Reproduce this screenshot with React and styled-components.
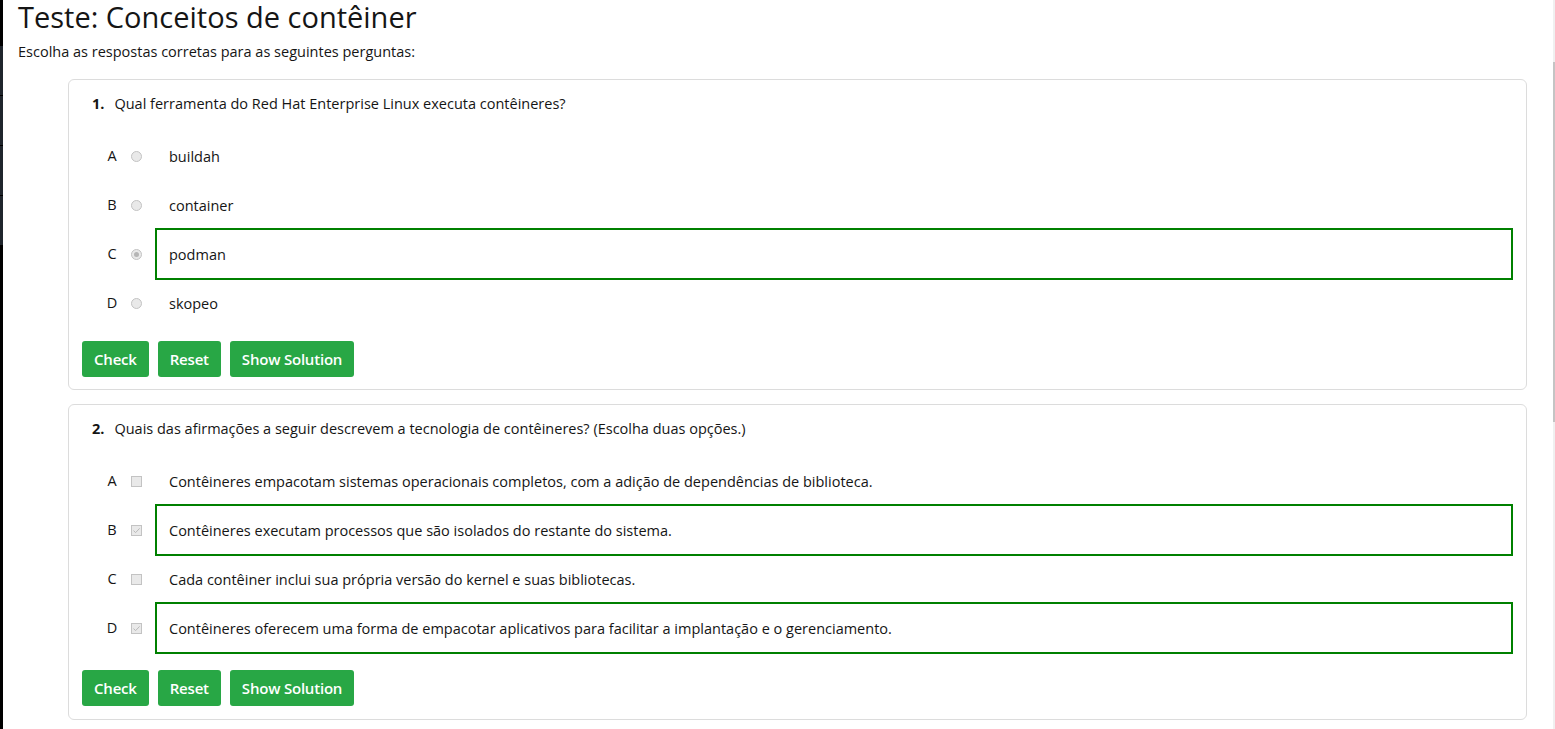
import React from "react";
import styled, { createGlobalStyle } from "styled-components";

const GlobalStyle = createGlobalStyle`
  html, body {
    margin: 0;
    padding: 0;
    background: #ffffff;
  }
  body {
    font-family: "Open Sans", "Liberation Sans", sans-serif;
    color: #151515;
  }
`;

const questions = [
  {
    type: "radio",
    text: "Qual ferramenta do Red Hat Enterprise Linux executa contêineres?",
    options: [
      { text: "buildah" },
      { text: "container" },
      { text: "podman", correct: true },
      { text: "skopeo" },
    ],
  },
  {
    type: "checkbox",
    text: "Quais das afirmações a seguir descrevem a tecnologia de contêineres? (Escolha duas opções.)",
    options: [
      { text: "Contêineres empacotam sistemas operacionais completos, com a adição de dependências de biblioteca." },
      { text: "Contêineres executam processos que são isolados do restante do sistema.", correct: true },
      { text: "Cada contêiner inclui sua própria versão do kernel e suas bibliotecas." },
      { text: "Contêineres oferecem uma forma de empacotar aplicativos para facilitar a implantação e o gerenciamento.", correct: true },
    ],
  },
];

const letters = ["A", "B", "C", "D"];

function Quiz() {
  return (
    <Frame>
      <GlobalStyle />
      <WindowEdge>
        <EdgeTabs>
          <EdgeTab />
          <EdgeTab />
          <EdgeTab />
          <EdgeTab />
        </EdgeTabs>
      </WindowEdge>
      <Page>
        <Title>Teste: Conceitos de contêiner</Title>
        <Intro>Escolha as respostas corretas para as seguintes perguntas:</Intro>
        <QuestionList>
          {questions.map((q, qi) => {
            const multi = q.type === "checkbox";
            return (
              <Card key={qi} $multi={multi}>
                <Question>
                  <Number>{qi + 1}.</Number>
                  <span>{q.text}</span>
                </Question>
                <Options $multi={multi}>
                  {q.options.map((o, oi) => (
                    <Option key={oi}>
                      <Letter>{letters[oi]}</Letter>
                      <Mark $round={!multi}>
                        {o.correct && !multi && <Dot />}
                        {o.correct && multi && (
                          <svg width="9" height="9" viewBox="0 0 9 9">
                            <path d="M1.5 4.6 L3.6 6.6 L7.6 2.4" fill="none" stroke="#b9b9b9" strokeWidth="1" />
                          </svg>
                        )}
                      </Mark>
                      <Answer $correct={o.correct}>{o.text}</Answer>
                    </Option>
                  ))}
                </Options>
                <Buttons $multi={multi}>
                  <Button>Check</Button>
                  <Button>Reset</Button>
                  <Button>Show Solution</Button>
                </Buttons>
              </Card>
            );
          })}
        </QuestionList>
      </Page>
      <Scrollbar>
        <Thumb />
      </Scrollbar>
    </Frame>
  );
}

const Frame = styled.div`
  display: flex;
  min-height: 729px;
`;

const WindowEdge = styled.div`
  width: 3px;
  flex-shrink: 0;
  background: #000;
  padding-top: 46px;
`;

const EdgeTabs = styled.div`
  display: flex;
  flex-direction: column;
  gap: 1px;
`;

const EdgeTab = styled.div`
  height: 49px;
  background: #1f252c;
`;

const Page = styled.main`
  flex: 1;
  padding: 0 26px 0 15px;
`;

const Title = styled.h1`
  margin: 0;
  font-size: 29px;
  line-height: 34px;
  font-weight: 400;
  color: #151515;
`;

const Intro = styled.p`
  margin: 8px 0 0;
  font-size: 14.5px;
  line-height: 20px;
`;

const QuestionList = styled.div`
  display: flex;
  flex-direction: column;
  gap: 14px;
  margin: 17px 0 0 50px;
`;

const Card = styled.section`
  border: 1px solid #dcdcdc;
  border-radius: 6px;
  padding: 13px 13px ${(p) => (p.$multi ? "13px" : "12px")} 13px;
`;

const Question = styled.div`
  display: flex;
  gap: 10px;
  padding-left: 10px;
  font-size: 14.5px;
  line-height: 22px;
`;

const Number = styled.span`
  font-weight: 700;
`;

const Options = styled.div`
  display: flex;
  flex-direction: column;
  margin-top: 15px;
`;

const Option = styled.div`
  display: grid;
  grid-template-columns: 16px 11px 1fr;
  column-gap: 11px;
  align-items: center;
  height: 49px;
  padding-left: 22px;
  font-size: 14.5px;
`;

const Letter = styled.span`
  text-align: center;
  line-height: 20px;
`;

const Mark = styled.span`
  box-sizing: border-box;
  width: 11px;
  height: 11px;
  border: 1px solid #c3c3c3;
  border-radius: ${(p) => (p.$round ? "50%" : "0")};
  background: #e9e9e9;
  display: flex;
  align-items: center;
  justify-content: center;
`;

const Dot = styled.span`
  width: 5px;
  height: 5px;
  border-radius: 50%;
  background: #b5b5b5;
`;

const Answer = styled.div`
  box-sizing: border-box;
  height: 52px;
  margin-left: 2px;
  display: flex;
  align-items: center;
  padding-left: 12px;
  border: 2px solid ${(p) => (p.$correct ? "#008000" : "transparent")};
`;

const Buttons = styled.div`
  display: flex;
  gap: 9px;
  margin-top: ${(p) => (p.$multi ? "19px" : "15px")};
`;

const Button = styled.button`
  height: 36px;
  padding: 0 12px;
  border: none;
  border-radius: 3px;
  background: #28a745;
  color: #fff;
  font-family: inherit;
  font-size: 15px;
  font-weight: 600;
  letter-spacing: -0.2px;
`;

const Scrollbar = styled.div`
  width: 2px;
  flex-shrink: 0;
  background: #f0f0f0;
  padding-top: 62px;
`;

const Thumb = styled.div`
  height: 360px;
  background: #c4c4c4;
`;

export default Quiz;
